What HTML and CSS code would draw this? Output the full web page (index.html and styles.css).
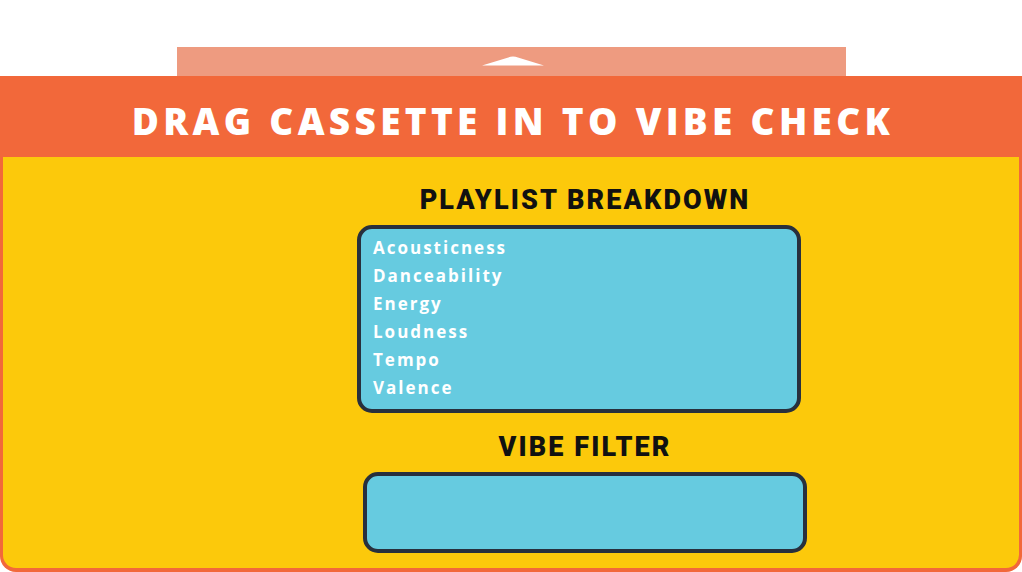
FILE: index.html
```html
<!DOCTYPE html>
<html>
<head>
<meta charset="utf-8">
<link rel="stylesheet" href="styles.css">
</head>
<body>
<div class="page">
  <div class="tab">
    <svg class="tab-arrow" width="62" height="10" viewBox="0 0 62 10"><path d="M0 9.5 L28.5 0.8 Q31 0 33.5 0.8 L62 9.5 Z" fill="#ffffff"/></svg>
  </div>
  <div class="panel">
    <div class="panel-header">DRAG CASSETTE IN TO VIBE CHECK</div>
    <div class="panel-body">
      <h2 class="section-title">PLAYLIST BREAKDOWN</h2>
      <div class="box breakdown">
        <div class="feature">Acousticness</div>
        <div class="feature">Danceability</div>
        <div class="feature">Energy</div>
        <div class="feature">Loudness</div>
        <div class="feature">Tempo</div>
        <div class="feature">Valence</div>
      </div>
      <h2 class="section-title filter-title">VIBE FILTER</h2>
      <div class="box filter"></div>
    </div>
  </div>
</div>
</body>
</html>
```
FILE: styles.css
```css
html, body {
  margin: 0;
  padding: 0;
  background: #ffffff;
}
body {
  width: 1022px;
  height: 572px;
  overflow: hidden;
  font-family: Roboto, "Noto Sans", sans-serif;
}
.page {
  padding-top: 47px;
}
.tab {
  margin: 0 176px 0 177px;
  height: 29px;
  background: #EE9B80;
  display: flex;
  justify-content: center;
}
.tab-arrow {
  display: block;
  margin-top: 9px;
  margin-left: 2px;
}
.panel {
  height: 496px;
  box-sizing: border-box;
  background: #F2683A;
  border-radius: 0 0 16px 16px;
  padding: 0 3px 4px;
  display: flex;
  flex-direction: column;
}
.panel-header {
  height: 81px;
  display: flex;
  align-items: center;
  justify-content: center;
  color: #ffffff;
  font-family: "Open Sans", Roboto, sans-serif;
  font-weight: 800;
  font-size: 37px;
  letter-spacing: 4.3px;
  padding-top: 8px;
  padding-left: 4px;
  box-sizing: border-box;
}
.panel-body {
  flex: 1;
  background: #FCC90B;
  border-radius: 0 0 13px 13px;
  display: flex;
  flex-direction: column;
  align-items: center;
  padding-left: 148px;
}
.section-title {
  margin: 27px 0 0;
  font-size: 27px;
  line-height: 32px;
  font-weight: 900;
  letter-spacing: 2.1px;
  color: #111111;
}
.box {
  box-sizing: border-box;
  width: 444px;
  background: #66CBE0;
  border: 4px solid #28303D;
  border-radius: 15px;
}
.breakdown {
  margin-top: 9px;
  margin-right: 12px;
  height: 188px;
  padding: 5px 0 0 12px;
}
.feature {
  color: #ffffff;
  font-family: "Open Sans", Roboto, sans-serif;
  font-weight: 700;
  font-size: 17px;
  line-height: 28px;
  letter-spacing: 2px;
}
.filter-title {
  margin-top: 18px;
}
.filter {
  margin-top: 9px;
  height: 81px;
}
```
